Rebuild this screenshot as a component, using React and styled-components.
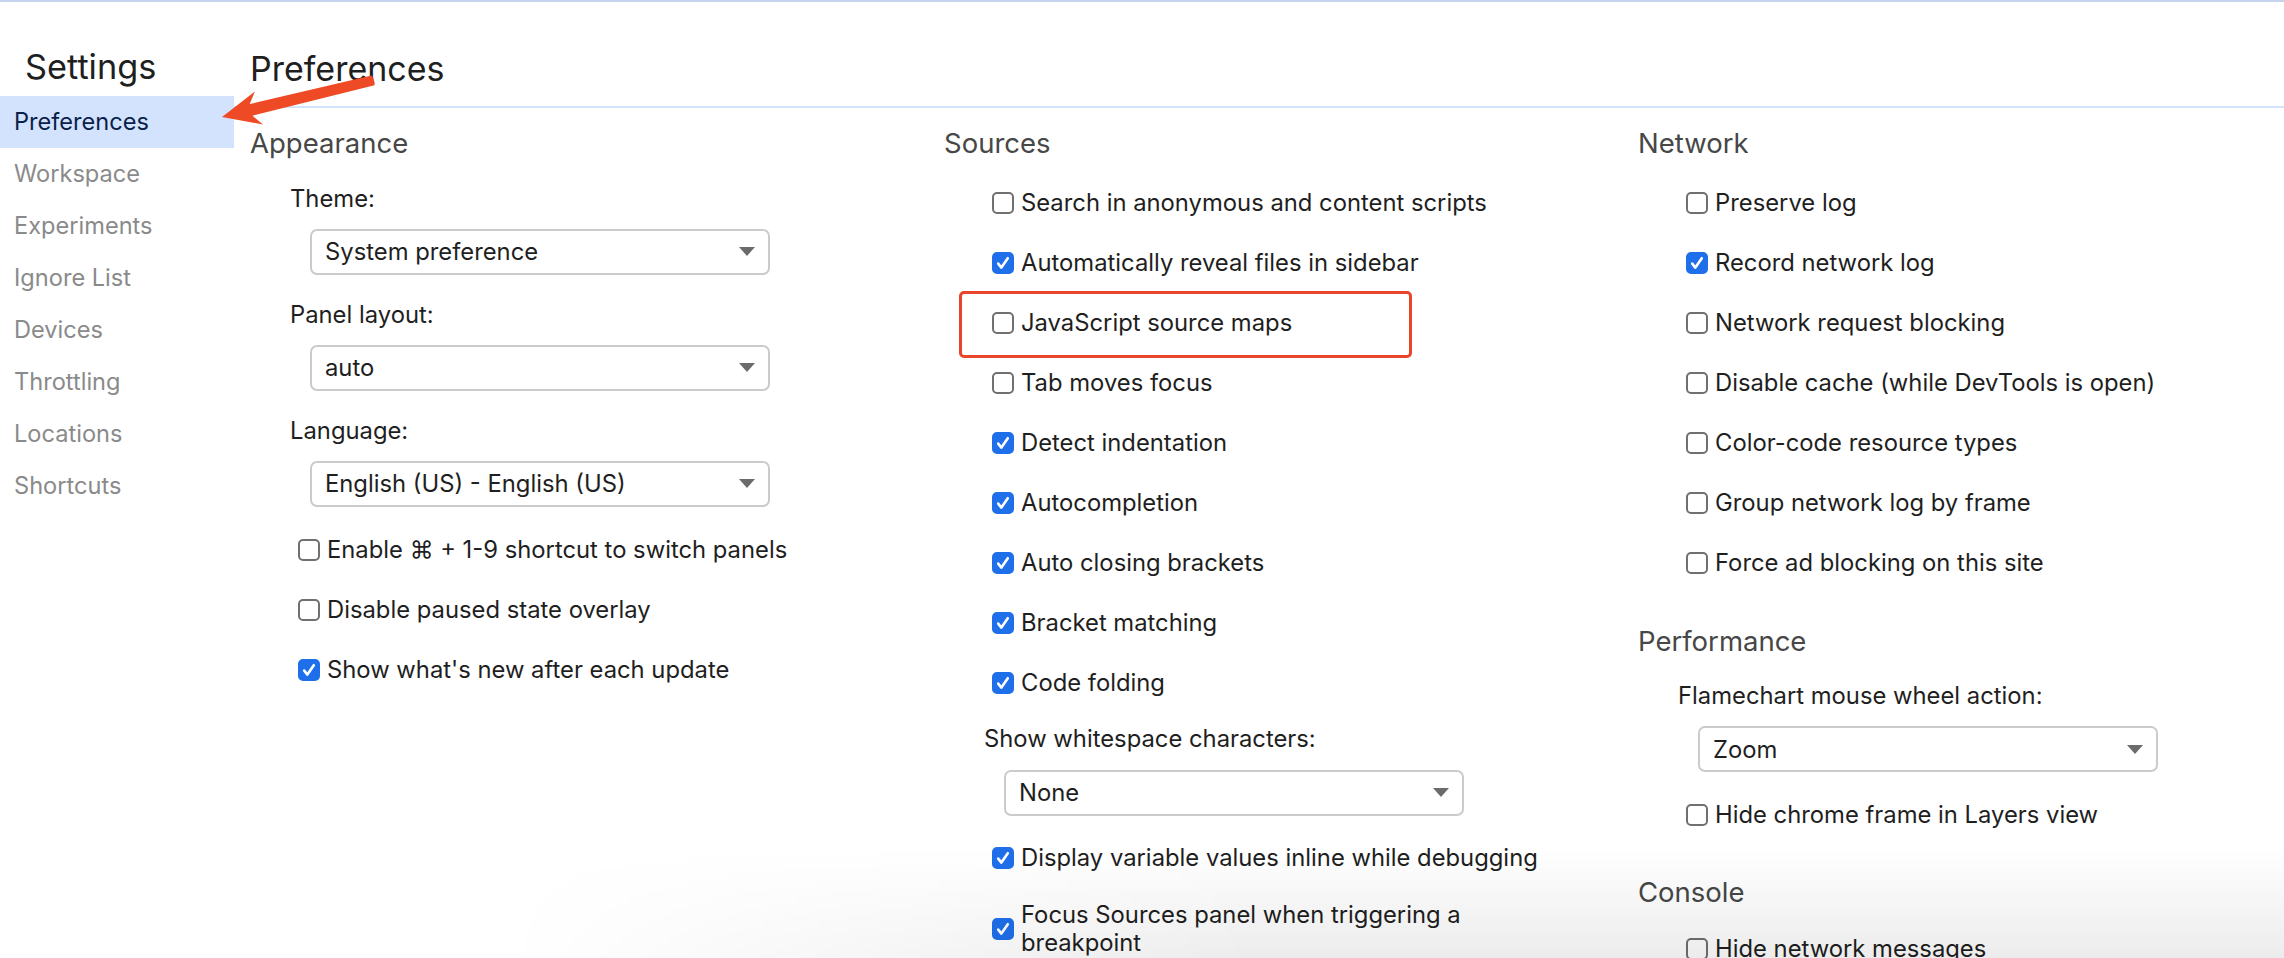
import React from "react";
import styled, { createGlobalStyle, css } from "styled-components";

const Global = createGlobalStyle`
  html, body { margin: 0; padding: 0; background: #ffffff; }
  body {
    font-family: Inter, "Liberation Sans", "DejaVu Sans", sans-serif;
    color: #1f1f1f;
    -webkit-font-smoothing: antialiased;
  }
  * { box-sizing: border-box; }
`;

const Page = styled.div`
  position: relative;
  width: 2284px;
  height: 958px;
  overflow: hidden;
  display: flex;
  flex-direction: column;
  background: #fff;
`;

const TopRule = styled.div`
  height: 2px;
  flex: none;
  background: #c6d3ef;
`;

const Body = styled.div`
  flex: 1;
  display: flex;
`;

const Sidebar = styled.nav`
  width: 234px;
  flex: none;
  display: flex;
  flex-direction: column;
`;

const SideTitle = styled.h1`
  margin: 0;
  height: 94px;
  padding: 44px 0 0 25px;
  font-size: 34.3px;
  line-height: 41px;
  font-weight: 400;
  color: #1f1f1f;
`;

const SideItem = styled.div`
  height: 52px;
  padding-left: 14px;
  font-size: 23.6px;
  line-height: 52px;
  color: #8a8a8a;
  ${(p) =>
    p.$active &&
    css`
      background: #d3e3fd;
      color: #0a1f4a;
    `}
`;

const Main = styled.main`
  flex: 1;
  display: flex;
  flex-direction: column;
`;

const Header = styled.h2`
  margin: 0;
  height: 106px;
  padding: 46px 0 0 16px;
  border-bottom: 2px solid #d3e3fd;
  font-size: 34px;
  line-height: 41px;
  font-weight: 400;
  color: #1f1f1f;
`;

const Columns = styled.div`
  display: grid;
  grid-template-columns: repeat(3, 694px);
  padding-left: 16px;
  align-items: start;
`;

const Column = styled.section`
  display: flex;
  flex-direction: column;
  align-items: flex-start;
  padding-top: 19px;
`;

const SectionTitle = styled.h3`
  margin: ${(p) => p.$mt || 0}px 0 0 0;
  font-size: 27.5px;
  line-height: 33px;
  font-weight: 400;
  color: #474747;
`;

const FieldLabel = styled.div`
  margin-top: ${(p) => p.$mt}px;
  padding-left: 40px;
  font-size: 23.8px;
  line-height: 28px;
  color: #1f1f1f;
`;

const SelectBox = styled.div`
  margin-top: ${(p) => p.$mt}px;
  margin-left: 60px;
  width: 460px;
  height: 46px;
  border: 2px solid #cbcbcb;
  border-radius: 7px;
  padding: 0 13px 0 13px;
  display: flex;
  align-items: center;
  justify-content: space-between;
  font-size: 23.8px;
  color: #1f1f1f;
  background: #fff;
`;

const Caret = styled.svg`
  width: 16px;
  height: 9px;
  flex: none;
`;

const CheckRow = styled.label`
  position: relative;
  margin-top: ${(p) => p.$mt}px;
  margin-left: 48px;
  display: flex;
  align-items: center;
  gap: 7px;
  font-size: 23.8px;
  line-height: 28px;
  color: #1f1f1f;
  ${(p) =>
    p.$highlight &&
    css`
      &::after {
        content: "";
        position: absolute;
        left: -33px;
        top: -18px;
        width: 447px;
        height: 61px;
        border: 3px solid #e8452b;
        border-radius: 5px;
        pointer-events: none;
      }
    `}
`;

const Box = styled.span`
  width: 22px;
  height: 22px;
  flex: none;
  border-radius: 5px;
  border: 2px solid ${(p) => (p.$checked ? "#1f6feb" : "#707070")};
  background: ${(p) => (p.$checked ? "#1f6feb" : "#fff")};
  display: flex;
  align-items: center;
  justify-content: center;
`;

const LabelText = styled.span`
  max-width: 530px;
`;

const Annotation = styled.svg`
  position: absolute;
  left: 0;
  top: 0;
  width: 420px;
  height: 160px;
  pointer-events: none;
`;

const BottomShade = styled.div`
  position: absolute;
  left: 0;
  right: 0;
  bottom: 0;
  height: 110px;
  pointer-events: none;
  background: linear-gradient(to bottom, rgba(0, 0, 0, 0), rgba(0, 0, 0, 0.075));
  -webkit-mask-image: linear-gradient(to right, transparent 22%, #000 55%);
  mask-image: linear-gradient(to right, transparent 22%, #000 55%);
`;

function Check({ checked, children, mt, highlight }) {
  return (
    <CheckRow $mt={mt} $highlight={highlight}>
      <Box $checked={checked}>
        {checked && (
          <svg width="16" height="16" viewBox="0 0 16 16">
            <path
              d="M3.2 8.6 L6.4 12.6 L12.8 3.2"
              fill="none"
              stroke="#fff"
              strokeWidth="2.6"
              strokeLinecap="round"
              strokeLinejoin="round"
            />
          </svg>
        )}
      </Box>
      <LabelText>{children}</LabelText>
    </CheckRow>
  );
}

function Select({ value, mt }) {
  return (
    <SelectBox $mt={mt}>
      <span>{value}</span>
      <Caret viewBox="0 0 16 9">
        <path d="M0 0 H16 L8 9 Z" fill="#6b6b6b" />
      </Caret>
    </SelectBox>
  );
}

const sidebarItems = [
  "Preferences",
  "Workspace",
  "Experiments",
  "Ignore List",
  "Devices",
  "Throttling",
  "Locations",
  "Shortcuts",
];

export default function App() {
  return (
    <>
      <Global />
      <Page>
        <TopRule />
        <Body>
          <Sidebar>
            <SideTitle>Settings</SideTitle>
            {sidebarItems.map((s, i) => (
              <SideItem key={s} $active={i === 0}>
                {s}
              </SideItem>
            ))}
          </Sidebar>
          <Main>
            <Header>Preferences</Header>
            <Columns>
              <Column>
                <SectionTitle>Appearance</SectionTitle>
                <FieldLabel $mt={24.5}>Theme:</FieldLabel>
                <Select mt={16} value="System preference" />
                <FieldLabel $mt={26}>Panel layout:</FieldLabel>
                <Select mt={16} value="auto" />
                <FieldLabel $mt={26}>Language:</FieldLabel>
                <Select mt={16} value="English (US) - English (US)" />
                <Check mt={29.5}>Enable ⌘ + 1-9 shortcut to switch panels</Check>
                <Check mt={32}>Disable paused state overlay</Check>
                <Check mt={32} checked>
                  Show what's new after each update
                </Check>
              </Column>

              <Column>
                <SectionTitle>Sources</SectionTitle>
                <Check mt={28.5}>Search in anonymous and content scripts</Check>
                <Check mt={32} checked>
                  Automatically reveal files in sidebar
                </Check>
                <Check mt={32} highlight>
                  JavaScript source maps
                </Check>
                <Check mt={32}>Tab moves focus</Check>
                <Check mt={32} checked>
                  Detect indentation
                </Check>
                <Check mt={32} checked>
                  Autocompletion
                </Check>
                <Check mt={32} checked>
                  Auto closing brackets
                </Check>
                <Check mt={32} checked>
                  Bracket matching
                </Check>
                <Check mt={32} checked>
                  Code folding
                </Check>
                <FieldLabel $mt={28}>Show whitespace characters:</FieldLabel>
                <Select mt={17} value="None" />
                <Check mt={28} checked>
                  Display variable values inline while debugging
                </Check>
                <Check mt={29} checked>
                  Focus Sources panel when triggering a breakpoint
                </Check>
              </Column>

              <Column>
                <SectionTitle>Network</SectionTitle>
                <Check mt={28.5}>Preserve log</Check>
                <Check mt={32} checked>
                  Record network log
                </Check>
                <Check mt={32}>Network request blocking</Check>
                <Check mt={32}>Disable cache (while DevTools is open)</Check>
                <Check mt={32}>Color-code resource types</Check>
                <Check mt={32}>Group network log by frame</Check>
                <Check mt={32}>Force ad blocking on this site</Check>
                <SectionTitle $mt={48}>Performance</SectionTitle>
                <FieldLabel $mt={24.5}>Flamechart mouse wheel action:</FieldLabel>
                <Select mt={16} value="Zoom" />
                <Check mt={28.5}>Hide chrome frame in Layers view</Check>
                <SectionTitle $mt={47}>Console</SectionTitle>
                <Check mt={26}>Hide network messages</Check>
              </Column>
            </Columns>
          </Main>
        </Body>
        <BottomShade />
        <Annotation viewBox="0 0 420 160">
          <path
            d="M371.5 75.6 Q375.5 80.2 374.5 85.2 L252.5 115.7 L263 124.5 L222 117 L254.9 91.5 L249.7 104.1 Z"
            fill="#ef4a26"
          />
        </Annotation>
      </Page>
    </>
  );
}
